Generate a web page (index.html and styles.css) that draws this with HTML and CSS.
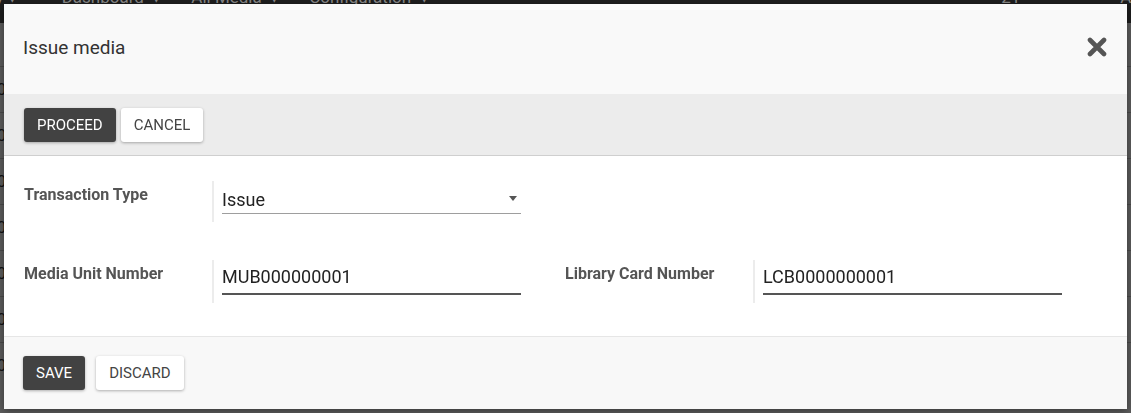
FILE: index.html
```html
<!DOCTYPE html>
<html lang="en">
<head>
    <meta charset="UTF-8">
    <meta name="viewport" content="width=device-width, initial-scale=1.0">
    <title>Issue media</title>
    <link rel="stylesheet" href="styles.css">
</head>
<body>
    <!-- page behind the dialog -->
    <nav class="navbar">
        <span class="brand">Library &#9662;</span>
        <span class="nav-link">Dashboard &nbsp;&#9662;</span>
        <span class="nav-link">All Media &nbsp;&#9662;</span>
        <span class="nav-link">Configuration &nbsp;&#9662;</span>
        <span class="nav-right">&#9684; 21</span>
        <span class="nav-user">Ad</span>
    </nav>
    <div class="page">
        <div class="page-row">0</div>
        <div class="page-row">0</div>
        <div class="page-row">0</div>
        <div class="page-row">0</div>
        <div class="page-row">0</div>
        <div class="page-row">0</div>
        <div class="page-row">0</div>
    </div>

    <div class="backdrop"></div>

    <div class="modal">
        <div class="modal-header">
            <h1 class="modal-title">Issue media</h1>
            <button class="close-btn" type="button" aria-label="Close">
                <svg width="20" height="20" viewBox="0 0 20 20">
                    <path d="M3 3 L17 17 M17 3 L3 17" stroke="#555" stroke-width="4.6" stroke-linecap="round" fill="none"/>
                </svg>
            </button>
        </div>

        <div class="modal-toolbar">
            <button class="btn btn-dark" type="button">Proceed</button>
            <button class="btn btn-light" type="button">Cancel</button>
        </div>

        <form class="modal-body">
            <div class="form-row">
                <div class="form-group">
                    <label class="form-label">Transaction Type</label>
                    <div class="form-field">
                        <div class="select-box">
                            <span>Issue</span>
                            <span class="caret"></span>
                        </div>
                    </div>
                </div>
            </div>
            <div class="form-row">
                <div class="form-group">
                    <label class="form-label" for="mun">Media Unit Number</label>
                    <div class="form-field">
                        <input class="text-input" id="mun" type="text" value="MUB000000001">
                    </div>
                </div>
                <div class="form-group">
                    <label class="form-label" for="lcn">Library Card Number</label>
                    <div class="form-field">
                        <input class="text-input" id="lcn" type="text" value="LCB0000000001">
                    </div>
                </div>
            </div>
        </form>

        <div class="modal-footer">
            <button class="btn btn-dark" type="button">Save</button>
            <button class="btn btn-light" type="button">Discard</button>
        </div>
    </div>
</body>
</html>
```

FILE: styles.css
```css
/* base */
body {
    font-family: Roboto, 'Liberation Sans', sans-serif;
    background-color: #fff;
    margin: 0;
    padding: 0;
    height: 413px;
    overflow: hidden;
}

/* page behind the dialog */
.navbar {
    position: relative;
    z-index: 2;
    height: 34px;
    margin-top: -11px;
    background-color: #1e1e1e;
    color: #8a8a8a;
    font-size: 17px;
    display: flex;
    align-items: flex-start;
    gap: 30px;
    padding: 0;
    line-height: 17px;
    white-space: nowrap;
}

.brand {
    margin-left: -48px;
    margin-right: 15px;
}

.nav-right {
    margin-left: auto;
    margin-right: 70px;
}

.nav-user {
    margin-right: -10px;
}

.page {
    padding-top: 43px;
}

.page-row {
    height: 45px;
    line-height: 45px;
    border-top: 1px solid #ccc;
    margin-left: -3px;
    color: #333;
    font-size: 16px;
}

.backdrop {
    position: fixed;
    inset: 0;
    z-index: 1;
    background-color: rgba(0, 0, 0, 0.64);
}

/* dialog */
.modal {
    position: fixed;
    z-index: 3;
    top: 4px;
    left: 4px;
    width: 1123px;
    height: 405px;
    background-color: #fff;
    display: flex;
    flex-direction: column;
    box-shadow: 0 2px 8px rgba(0, 0, 0, 0.4);
}

.modal-header {
    height: 90px;
    box-sizing: border-box;
    background-color: #f9f9f9;
    display: flex;
    align-items: center;
    justify-content: space-between;
    padding: 0 20px 3px 19px;
}

.modal-title {
    margin: 0;
    font-size: 19px;
    font-weight: normal;
    line-height: 22px;
    color: #333;
}

.close-btn {
    border: none;
    background: none;
    padding: 0;
    width: 20px;
    height: 20px;
    cursor: pointer;
    margin-bottom: 2px;
}

.close-btn svg {
    display: block;
}

.modal-toolbar {
    height: 62px;
    box-sizing: border-box;
    background-color: #ececec;
    border-bottom: 1px solid #cfcfcf;
    display: flex;
    gap: 5px;
    padding: 14px 20px 0 20px;
}

/* buttons */
.btn {
    height: 34px;
    padding: 0 13px;
    border: none;
    border-radius: 3px;
    font-family: inherit;
    font-size: 15px;
    text-transform: uppercase;
    cursor: pointer;
    box-shadow: 0 1px 3px rgba(0, 0, 0, 0.3);
}

.btn-dark {
    background-color: #424242;
    color: #fff;
}

.btn-light {
    background-color: #fff;
    color: #444;
}

/* form */
.modal-body {
    flex: 1;
    margin: 0;
    padding: 25px 20px 0 20px;
    display: flex;
    flex-direction: column;
    gap: 38px;
}

.form-row {
    display: flex;
}

.form-group {
    width: 541px;
    display: flex;
}

.form-label {
    width: 188px;
    padding-top: 4px;
    font-size: 16px;
    font-weight: bold;
    line-height: 19px;
    color: #555;
}

.form-field {
    border-left: 2px solid #ececec;
    padding: 8px 0 8px 8px;
}

.select-box {
    width: 299px;
    box-sizing: border-box;
    display: flex;
    align-items: center;
    justify-content: space-between;
    font-size: 18px;
    line-height: 21px;
    color: #222;
    padding: 0 4px 3px 0;
    border-bottom: 1px solid #9e9e9e;
}

.caret {
    width: 0;
    height: 0;
    border-left: 4.5px solid transparent;
    border-right: 4.5px solid transparent;
    border-top: 5px solid #555;
    margin-top: -2px;
}

.text-input {
    display: block;
    width: 299px;
    box-sizing: border-box;
    margin: -2px 0 0 0;
    padding: 0 0 6px 0;
    border: none;
    border-bottom: 2px solid #555;
    background: none;
    font-family: inherit;
    font-size: 18px;
    line-height: 21px;
    height: 29px;
    color: #222;
    outline: none;
}

.modal-footer {
    height: 73px;
    box-sizing: border-box;
    background-color: #f8f8f8;
    border-top: 1px solid #e6e6e6;
    display: flex;
    gap: 11px;
    padding: 19px 19px 0 19px;
}
```
